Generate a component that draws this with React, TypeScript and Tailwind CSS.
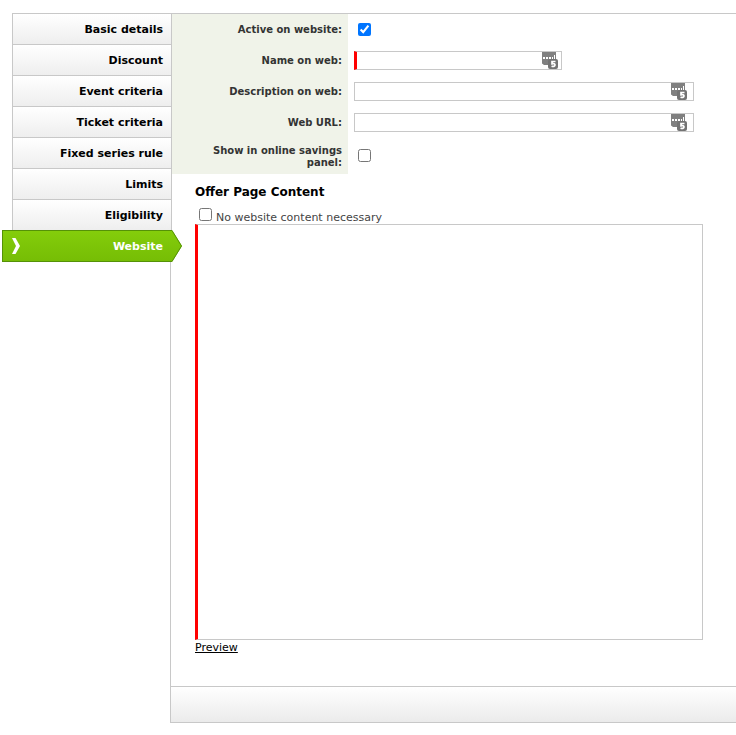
import { ReactNode, useState } from "react";

const tabs = [
    "Basic details",
    "Discount",
    "Event criteria",
    "Ticket criteria",
    "Fixed series rule",
    "Limits",
    "Eligibility"
];

const PasswordBadge = () => (
    <svg className="h-[17px] w-4" viewBox="0 0 16 17" aria-hidden="true">
        <path d="M0 0h14v12H7.500L6 13H2L0 11.500z" fill="#808080" />
        <path d="M1 5h2v2H1zM4 5h2v2H4zM7 5h2v2H7zM10 5h1v2h-1zM12 3h1v4h-1z" fill="#fff" />
        <rect x="6" y="7" width="10" height="10" rx="2" fill="#737373" />
        <path d="M13.500 9.500H10v2.300c2-.4 3 .1 3 1.200 0 1.400-1.800 1.700-3.500 1.200" fill="none" stroke="#fff" strokeWidth="1.700" />
    </svg>
);

interface ITextFieldProps {
    id: string;
    className: string;
    badgeClassName: string;
    required?: boolean;
}

const TextField = (props: ITextFieldProps) => (
    <div className={`relative ${props.className}`}>
        <input
            id={props.id}
            type="text"
            className={`block h-[19px] w-full border border-[#c8c8c8] bg-white px-1 pr-6 text-[11px] outline-none ${
                props.required ? "border-l-3 border-l-[#ff0000]" : ""
            }`}
        />
        <span className={`absolute top-px ${props.badgeClassName}`}>
            <PasswordBadge />
        </span>
    </div>
);

interface IFormRowProps {
    label: string;
    htmlFor: string;
    tall?: boolean;
    children: ReactNode;
}

const FormRow = (props: IFormRowProps) => (
    <div className={`flex ${props.tall ? "h-9" : "h-[31px]"}`}>
        <div
            className={`flex w-[177px] shrink-0 items-center justify-end bg-[#f0f3e9] pr-1.5 pl-8 ${
                props.tall ? "pt-0.5" : ""
            }`}
        >
            <label htmlFor={props.htmlFor} className="text-right text-[10px] leading-3 font-bold text-[#333]">
                {props.label}
            </label>
        </div>
        <div className={`flex min-w-0 grow items-center pl-1.5 ${props.tall ? "pb-0.5" : ""}`}>{props.children}</div>
    </div>
);

export default function App() {
    const [active, setActive] = useState(true);
    const [savings, setSavings] = useState(false);
    const [noContent, setNoContent] = useState(false);

    return (
        <div className="flex bg-white pt-[13px] font-['Verdana','DejaVu_Sans',sans-serif] text-[11px] text-black">
            <nav className="relative z-10 -mr-0.5 w-[172px] shrink-0 self-start">
                <ul className="ml-3 border-x border-[#c8c8c8]">
                    {tabs.map((tab) => (
                        <li key={tab}>
                            <a
                                href="#"
                                className="block h-[31px] border-t border-[#c8c8c8] bg-linear-to-b from-white to-[#eeeeee] pt-0.5 pr-2 text-right leading-7 font-bold"
                            >
                                {tab}
                            </a>
                        </li>
                    ))}
                </ul>
                <a
                    href="#"
                    aria-current="page"
                    className="relative ml-0.5 flex h-8 items-center justify-between border-y border-l border-[#559207] bg-linear-to-b from-[#84cd0b] to-[#76bd05] px-[9px] font-bold text-white"
                >
                    <svg className="h-4 w-2" viewBox="0 0 8 16" aria-hidden="true">
                        <path d="M0 0h3.500L8 8l-4.500 8H0l4-8z" fill="#fff" />
                    </svg>
                    <span className="pt-0.5">Website</span>
                    <svg className="absolute -top-px left-full h-8 w-2.5" viewBox="0 0 10 32" aria-hidden="true">
                        <defs>
                            <linearGradient id="tab-point" x1="0" y1="0" x2="0" y2="1">
                                <stop offset="0" stopColor="#84cd0b" />
                                <stop offset="1" stopColor="#76bd05" />
                            </linearGradient>
                        </defs>
                        <path d="M0 0L10 16 0 32z" fill="url(#tab-point)" />
                        <path d="M0 .5L9.500 16 0 31.500" fill="none" stroke="#559207" />
                    </svg>
                </a>
            </nav>

            <main className="min-w-0 grow border-t border-b border-l border-[#c8c8c8]">
                <form>
                    <FormRow label="Active on website:" htmlFor="active">
                        <input
                            id="active"
                            type="checkbox"
                            className="ml-1 size-[13px]"
                            checked={active}
                            onChange={(e) => setActive(e.target.checked)}
                        />
                    </FormRow>
                    <FormRow label="Name on web:" htmlFor="web-name">
                        <TextField id="web-name" className="w-52" badgeClassName="right-1" required />
                    </FormRow>
                    <FormRow label="Description on web:" htmlFor="web-description">
                        <TextField id="web-description" className="w-[340px]" badgeClassName="right-[7px]" />
                    </FormRow>
                    <FormRow label="Web URL:" htmlFor="web-url">
                        <TextField id="web-url" className="w-[340px]" badgeClassName="right-[7px]" />
                    </FormRow>
                    <FormRow label="Show in online savings panel:" htmlFor="savings" tall>
                        <input
                            id="savings"
                            type="checkbox"
                            className="ml-1 size-[13px]"
                            checked={savings}
                            onChange={(e) => setSavings(e.target.checked)}
                        />
                    </FormRow>

                    <section className="pt-2 pr-[33px] pb-[30px] pl-6">
                        <h2 className="text-[12px] leading-5 font-bold">Offer Page Content</h2>
                        <div className="mt-1.5 flex h-4 pl-1">
                            <input
                                id="no-content"
                                type="checkbox"
                                className="size-[13px]"
                                checked={noContent}
                                onChange={(e) => setNoContent(e.target.checked)}
                            />
                            <label htmlFor="no-content" className="ml-1 pt-0.5 leading-4 text-[#444]">
                                No website content necessary
                            </label>
                        </div>
                        <textarea
                            aria-label="Offer page content"
                            className="block h-[416px] w-full resize-none border border-l-3 border-[#c8c8c8] border-l-[#ff0000] bg-white p-1 outline-none"
                        />
                        <a href="#" className="block w-fit leading-4 underline">
                            Preview
                        </a>
                    </section>
                    <footer className="h-9 border-t border-[#c8c8c8] bg-linear-to-b from-white to-[#ebebeb]" />
                </form>
            </main>
        </div>
    );
}
